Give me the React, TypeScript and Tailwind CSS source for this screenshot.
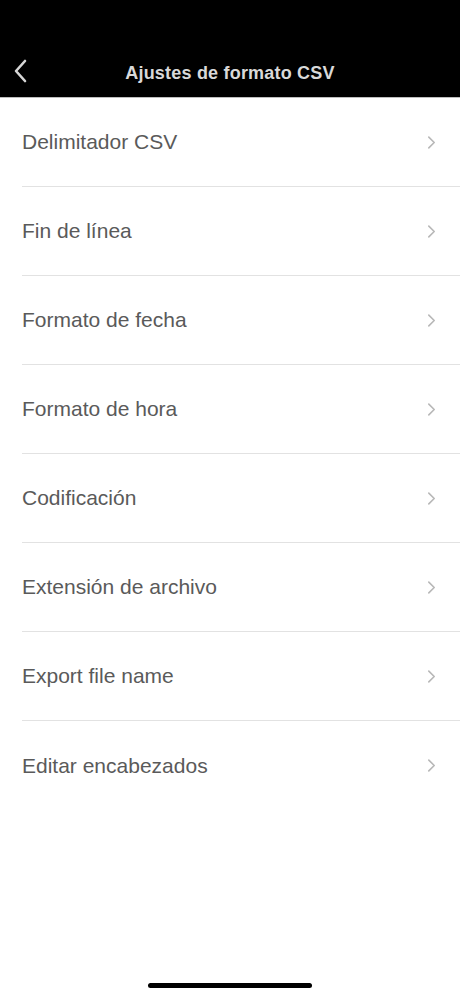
import React from 'react';

const items = [
  'Delimitador CSV',
  'Fin de línea',
  'Formato de fecha',
  'Formato de hora',
  'Codificación',
  'Extensión de archivo',
  'Export file name',
  'Editar encabezados',
];

const Chevron: React.FC<{ className?: string }> = ({ className }) => (
  <svg viewBox="0 0 10 16" className={className} fill="none" stroke="currentColor" strokeWidth={1.8} strokeLinecap="round" strokeLinejoin="round">
    <path d="M2 2l6 6-6 6" />
  </svg>
);

export default function App() {
  return (
    <div className="relative w-[460px] h-[996px] bg-white overflow-hidden" style={{ fontFamily: '"Liberation Sans", Arial, sans-serif' }}>
      {/* Header */}
      <div className="h-[98px] bg-black border-b border-[#bdbdbd] flex items-end relative">
        <div className="h-[50px] w-full flex items-center justify-center relative">
          <button className="absolute left-[12px] top-[12px] text-[#d6d6d6]">
            <svg viewBox="0 0 14 24" className="w-[16px] h-[24px]" fill="none" stroke="currentColor" strokeWidth={2.6} strokeLinecap="round" strokeLinejoin="round">
              <path d="M12 2L3 12l9 10" />
            </svg>
          </button>
          <h1 className="text-[18px] font-bold text-[#d9d9d9] tracking-[0.2px] mt-[2px]">Ajustes de formato CSV</h1>
        </div>
      </div>

      {/* List */}
      <ul className="pl-[22px]">
        {items.map((label, i) => (
          <li
            key={label}
            className={`h-[89px] flex items-center justify-between pr-[24px] ${i < items.length - 1 ? 'border-b border-[#e2e2e2]' : ''}`}
          >
            <span className="text-[21px] text-[#5a5a5a]">{label}</span>
            <Chevron className="w-[9px] h-[15px] text-[#b8b8b8]" />
          </li>
        ))}
      </ul>

      {/* Home indicator */}
      <div className="absolute bottom-[8px] left-[148px] w-[164px] h-[5px] rounded-full bg-black" />
    </div>
  );
}
